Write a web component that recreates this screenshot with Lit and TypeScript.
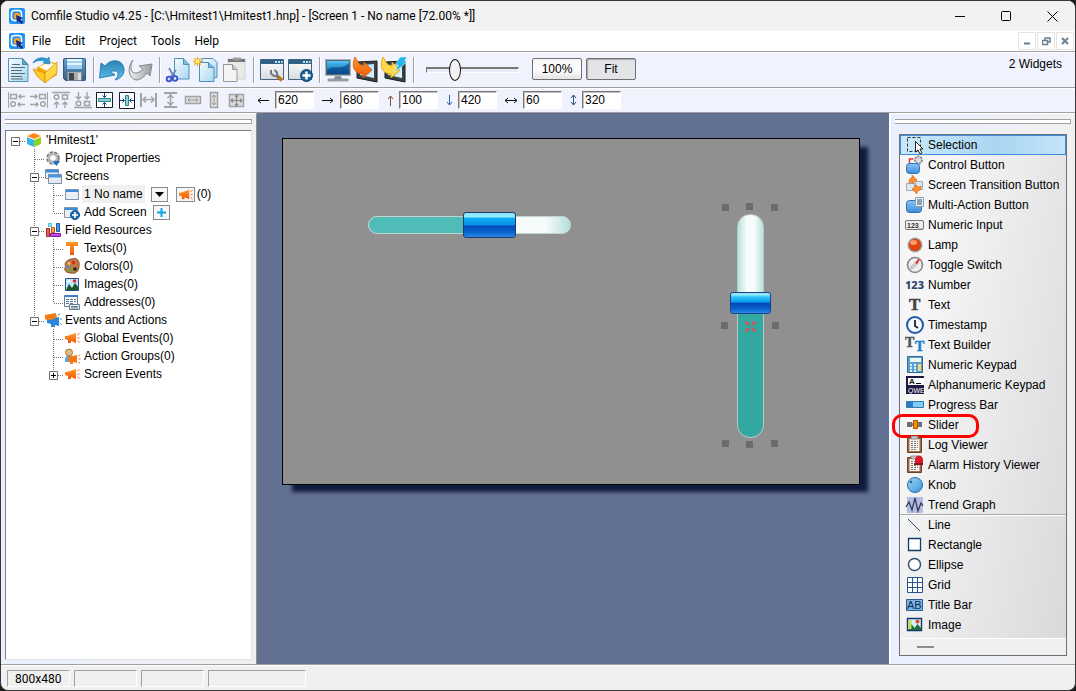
import { LitElement, html, svg, css } from "lit";
import { customElement } from "lit/decorators.js";

/* ---------- Toolbar icons, 28 x 26 ---------- */
const toolIcons: Record<string, unknown> = {
  doc: svg`<path d="M4.500 1.500h14l5.500 6v17h-19.500z" fill="url(#paper)" stroke="#5a93b5"/><path d="M18.500 1.500v6h5.500z" fill="#5ea9d2" stroke="#4b89b0"/><path d="M8 7.500h8M7 10.500h14M7 13.500h11M7 16.500h14M7 19.500h11M7 22h12" stroke="#566a78" stroke-width="1.200"/>`,
  open: svg`<path d="M4 11l13-7 8 3v11l-12 7z" fill="#f5a800"/><path d="M7 10l10-5 7 3-9 6z" fill="#fffdf0"/><path d="M1 12l12 4v10l-8-7z" fill="#ffc928" stroke="#dc8a00" stroke-width=".8"/><path d="M13 16l12-11v11l-12 10z" fill="#ffd84a" stroke="#e09000" stroke-width=".8"/><path d="M1 6c3-6 10-6 14-4l2-2 1 7-7-1 2-2c-4-1-8-1-12 2z" fill="#2b9bd8" stroke="#1479b4" stroke-width=".6"/>`,
  save: svg`<path d="M3.500 2.500q0-1 1-1h20q1 0 1 1v20q0 1-1 1h-19l-2-2z" fill="url(#steel)" stroke="#35597c"/><path d="M7 2h15v10h-15z" fill="#e8f5ff"/><path d="M7 4h15v2h-15zM7 8h15v4h-15z" fill="#9fd0ef"/><path d="M7.500 15h14v8.500h-14z" fill="#a9adb0"/><path d="M9 16h5v7h-5z" fill="#3e464c"/><path d="M18 16h3v7h-3z" fill="#dadddf"/>`,
  undo: svg`<path d="M3 6l4 3c6-8 18-7 19 3 .5 6-4 10-9 11 4-4 4-9 0-9-2 0-3 0-4 1l4 3-15.500 3z" fill="url(#blueArrow)" stroke="#166e9d" stroke-width=".8"/>`,
  redo: svg`<path d="M7 3c-6 7-5 18 3 20 5 0 9-4 11-7l3 3 2-12-13 2 4 3c-4 5-12 6-12-1 0-4 0-5 2-8z" fill="url(#grayArrow)" stroke="#83868a" stroke-width="1"/>`,
  cut: svg`<path d="M10.500 1.500h9l5.500 6v14.500h-14.500z" fill="url(#paper)" stroke="#4d91ba"/><path d="M19.500 1.500v6h5.500" fill="#7dbce0" stroke="#4d91ba"/><path d="M5 11l5 9M12 13l-6 8" stroke="#6a86b8" stroke-width="1.800"/><circle cx="5" cy="22" r="2.300" fill="#d9e0ff" stroke="#3c52c8" stroke-width="1.800"/><circle cx="11" cy="21.500" r="2.300" fill="#d9e0ff" stroke="#3c52c8" stroke-width="1.800"/>`,
  copy: svg`<path d="M10 1.500h11l4 4v15h-15z" fill="url(#paper)" stroke="#4d91ba"/><path d="M7.500 5.500h9l5.500 5v14h-14.500z" fill="url(#paper)" stroke="#4d91ba"/><path d="M16.500 5.500v5h5.500" fill="#7dbce0" stroke="#4d91ba"/><path d="M5.500 0v9M1 4.500h9M2.300 1.300l6.400 6.400M8.700 1.300l-6.400 6.400" stroke="#f0a818" stroke-width="1.300"/><circle cx="5.500" cy="4.500" r="2" fill="#fff07a"/>`,
  paste: svg`<path d="M8 2h17v20h-17z" fill="#e9e9e9" stroke="#d2d2d2"/><path d="M8 2h17v3h-17z" fill="#777"/><path d="M13 .5h8v3h-8z" fill="#9b9b9b"/><path d="M3.500 7.500h9l4.500 5v12h-13.500z" fill="#f4f4f4" stroke="#999"/><path d="M12.500 7.500v5h4.500" fill="#ccc" stroke="#999"/>`,
  winTool: svg`<path d="M2.500 2.500h23v20h-23z" fill="url(#winBody)" stroke="#3e6584"/><path d="M3 3h22v4h-22z" fill="#2f6285"/><path d="M17 4h2v2h-2zM20 4h2v2h-2zM23 4h1.500v2h-1.500z" fill="#bfe0f2"/><path d="M18 18l6 5.500" stroke="#b96f1e" stroke-width="3.500"/><path d="M13 13v3.500l3 2.500h3v-3.500l-2.500-2.500" fill="none" stroke="#6d7b86" stroke-width="2"/>`,
  winAdd: svg`<path d="M2.500 2.500h23v20h-23z" fill="url(#winBody)" stroke="#3e6584"/><path d="M3 3h22v4h-22z" fill="#2f6285"/><path d="M17 4h2v2h-2zM20 4h2v2h-2zM23 4h1.500v2h-1.500z" fill="#bfe0f2"/><circle cx="20.500" cy="18.500" r="6" fill="#1a6196" stroke="#0f4268"/><path d="M20.500 14.500v8M16.500 18.500h8" stroke="#fff" stroke-width="2.400"/>`,
  monitor: svg`<path d="M1.500 2.500h25v16h-25z" fill="#586c78" stroke="#a8b2b8"/><path d="M3 4h22v13h-22z" fill="url(#screenBlue)"/><path d="M3 13c7-6 14 1 22-7v11h-22z" fill="#053d7b" opacity=".6"/><path d="M11 19h6l1 3h-8z" fill="#89949a"/><path d="M4 22h20v2h-20z" fill="#a7b0b5" stroke="#68747b" stroke-width=".6"/>`,
  down: svg`<path d="M5 5l20-1v21l-20-4z" fill="#3a4247" stroke="#171c20"/><path d="M8 8l14-1v14l-14-3z" fill="url(#screenSky)"/><path d="M3 0c3 4 3 8 9 9v-4l8 8-9 8v-4c-9 0-12-8-8-17z" fill="url(#orange)" stroke="#d45a00" stroke-width=".8"/>`,
  run: svg`<path d="M5 5l20-1v21l-20-4z" fill="#3a4247" stroke="#171c20"/><path d="M8 8l14-1v14l-14-3z" fill="url(#screenSky)"/><path d="M3 0c3 4 3 8 9 9v-4l8 8-9 8v-4c-9 0-12-8-8-17z" fill="#ffd84b" stroke="#dda000" stroke-width=".8"/><path d="M20 0h7l-3 5h3l-12 10 3-7h-3z" fill="#20b7ec" stroke="#eefaff" stroke-width=".5"/>`,
};

/* ---------- Alignment icons, 22 x 18 ---------- */
const G = "#a3a3a3";
const alignIcons: Record<string, unknown> = {
  left: svg`<path d="M2.500 1v16" stroke="${G}"/><path d="M4.500 3.500h6v4h-6z" fill="none" stroke="${G}" stroke-width="1.500"/><circle cx="7" cy="13" r="2.300" fill="none" stroke="${G}" stroke-width="1.500"/><path d="M19 5.500h-6m2-2l-2 2 2 2M19 13.500h-7m2-2l-2 2 2 2" fill="none" stroke="${G}" stroke-width="1.400"/>`,
  right: svg`<path d="M19.500 1v16" stroke="${G}"/><path d="M11.500 3.500h6v4h-6z" fill="none" stroke="${G}" stroke-width="1.500"/><circle cx="15" cy="13" r="2.300" fill="none" stroke="${G}" stroke-width="1.500"/><path d="M2 5.500h7m-2-2l2 2-2 2M2 13.500h8m-2-2l2 2-2 2" fill="none" stroke="${G}" stroke-width="1.400"/>`,
  top: svg`<path d="M2 1.500h18" stroke="${G}" stroke-width="1.400"/><circle cx="6.500" cy="6" r="2.300" fill="none" stroke="${G}" stroke-width="1.500"/><path d="M12.500 4h5v4h-5z" fill="none" stroke="${G}" stroke-width="1.500"/><path d="M6.500 17v-6m-2.500 2.500l2.500-2.500 2.500 2.500M15 17v-6m-2.500 2.500l2.500-2.500 2.500 2.500" fill="none" stroke="${G}" stroke-width="1.400"/>`,
  bottom: svg`<path d="M2 16.500h18" stroke="${G}" stroke-width="1.400"/><circle cx="6.500" cy="12.500" r="2.300" fill="none" stroke="${G}" stroke-width="1.500"/><path d="M12.500 10.500h5v4h-5z" fill="none" stroke="${G}" stroke-width="1.500"/><path d="M6.500 1v7m-2.500-2.500l2.500 2.500 2.500-2.500M15 1v7m-2.500-2.500l2.500 2.500 2.500-2.500" fill="none" stroke="${G}" stroke-width="1.400"/>`,
  midV: svg`<path d="M2.500 1.500h16v15h-16z" fill="#fff" stroke="#1c1c1c"/><path d="M4.500 7.500h12v3h-12z" fill="#8fd0d4" stroke="#26848c"/><path d="M10.500 2v4m-2-1.500l2 2 2-2M10.500 16v-4m-2 1.500l2-2 2 2" fill="none" stroke="#123d7c"/>`,
  midH: svg`<path d="M3.500 1.500h15v16h-15z" fill="#fff" stroke="#1c1c1c"/><path d="M9.500 4.500h3v10h-3z" fill="#8fd0d4" stroke="#26848c"/><path d="M4 9.500h4m-1.500-2l2 2-2 2M18 9.500h-4m1.500-2l-2 2 2 2" fill="none" stroke="#123d7c"/>`,
  spaceH: svg`<path d="M3 2v14M18 2v14" stroke="${G}" stroke-width="2"/><path d="M5 8.500h11m-8-3l-3 3 3 3m5-6l3 3-3 3" fill="none" stroke="${G}" stroke-width="1.500"/>`,
  spaceV: svg`<path d="M4 2h13M4 16h13" stroke="${G}" stroke-width="2"/><path d="M10.500 3v12m-3-8l3-3 3 3m-6 4l3 3 3-3" fill="none" stroke="${G}" stroke-width="1.500"/>`,
  sameW: svg`<path d="M3.500 5.500h15v7h-15z" fill="#ddd" stroke="${G}" stroke-width="1.500"/><path d="M6 9h10m-8-2l-2 2 2 2m6-4l2 2-2 2" fill="none" stroke="#999"/>`,
  sameH: svg`<path d="M6.500 1.500h7v15h-7z" fill="#ddd" stroke="${G}" stroke-width="1.500"/><path d="M10 4v10m-2-8l2-2 2 2m-4 6l2 2 2-2" fill="none" stroke="#999"/>`,
  same: svg`<path d="M3.500 3.500h14v12h-14z" fill="#ddd" stroke="${G}" stroke-width="1.500"/><path d="M5 9.500h11m-5.500-5v10M7 7.500l-2 2 2 2m7-4l2 2-2 2M9 6l1.500-2 1.500 2m-3 7l1.500 2 1.500-2" fill="none" stroke="#888" stroke-width="1.200"/>`,
};

/* ---------- Small tree icons, 19 x 18 ---------- */
const horn = (f: string) => svg`<path d="M2 7l2 0 9-3v10l-5-2v2h-3v-3l-3-1z" fill="${f}"/><path d="M14.500 6l2-1.500M14.500 9h2M14.500 12l2 1.500" stroke="#ff5a2c"/>`;
const treeIcons: Record<string, unknown> = {
  cube: svg`<path d="M9 2l7 3-7 3-7-3z" fill="#ff8a17"/><path d="M2 6l7 3v7l-7-3z" fill="#35b5ea"/><path d="M16 6l-7 3v7l7-3z" fill="#8ed321"/>`,
  gear: svg`<circle cx="9" cy="9" r="5" fill="none" stroke="#7c7c7c" stroke-width="3.500" stroke-dasharray="3 1"/><circle cx="9" cy="9" r="4" fill="none" stroke="#b8b8b8" stroke-width="2.500"/><path d="M9 12h7l-3.500 5z" fill="#1673c4"/>`,
  screens: svg`<path d="M1.500 2.500h13v9h-13z" fill="#e9eff5" stroke="#7390ad"/><path d="M2 3h12v2.500h-12z" fill="#3d8bdc"/><path d="M4.500 7.500h13v9h-13z" fill="#e4eaf0" stroke="#7390ad"/><path d="M5 8h12v2.500h-12z" fill="#4a98e4"/>`,
  screen: svg`<path d="M2.500 4.500h13v10h-13z" fill="#e9eef3" stroke="#7c95ae"/><path d="M3 5h12v2h-12z" fill="#3d8bdc"/>`,
  screenAdd: svg`<path d="M1.500 4.500h13v10h-13z" fill="#e9eef3" stroke="#7c95ae"/><path d="M2 5h12v2h-12z" fill="#3d8bdc"/><circle cx="12" cy="12" r="4.500" fill="#1e69ae" stroke="#12528d"/><path d="M12 9v6M9 12h6" stroke="#fff" stroke-width="1.600"/>`,
  blocks: svg`<path d="M4.500 2.500h3v3h-3z" fill="#a8edff" stroke="#3cbde0"/><path d="M2.500 7.500h3v8h-3z" fill="#ee5b60" stroke="#a12828"/><path d="M7.500 6.500h3v5h-3z" fill="#ff9d3b" stroke="#c65a00"/><path d="M12.500 2.500h3v8h-3z" fill="#419bea" stroke="#1a5fa0"/><path d="M6.500 12.500h10v3h-10z" fill="#c14ae5" stroke="#7e1ba0"/>`,
  tee: svg`<path d="M3 3h12v4h-4v9h-4v-9h-4z" fill="url(#orange)"/>`,
  palette: svg`<path d="M9 2c5-2 8 2 7 7 0 6-4 8-8 7-4 0-7-2-6-5 1-2 0-3 0-4 1-3 4-5 7-5z" fill="#bd7a48" stroke="#875028"/><circle cx="10.500" cy="5.500" r="1.800" fill="#e22"/><circle cx="5" cy="10" r="1.500" fill="#2a9cee"/><circle cx="7" cy="13.500" r="1.500" fill="#3cbb36"/><circle cx="12" cy="12" r="1.800" fill="#222"/><circle cx="6" cy="6.500" r="1.300" fill="#ffe14a"/>`,
  image: svg`<path d="M2.500 3.500h13v12h-13z" fill="#bfe6ff" stroke="#23527e"/><path d="M3 15l3-6 3 4 3-5 3 4v3z" fill="#165a2c"/><circle cx="11.500" cy="6" r="1.800" fill="#e22"/><path d="M4 7c0-2 4-2 4 0z" fill="#fff"/>`,
  list: svg`<path d="M1.500 2.500h13v11h-13z" fill="#f4f7fb" stroke="#667d95"/><path d="M2 2h13v2h-13z" fill="#3e7dc8"/><path d="M3 6.500h10M3 8.500h10M3 10.500h7" stroke="#657689" stroke-dasharray="3 1"/><path d="M6.500 11.500h10v5h-10z" fill="#eef3f8" stroke="#667d95"/><path d="M8 13.500h7M8 15h7" stroke="#657689"/>`,
  horns: svg`<path d="M1 4l11-2 1 5-8 3-4-2z" fill="#f47a16"/><path d="M3 9l3 0 9-3v9l-4-1v2h-4v-3l-4-1z" fill="#2a86d8"/><path d="M14 4l2-1M16 8h2M16 12l2 2" stroke="#3a93d8"/>`,
  horn: horn("url(#orange)"),
  action: svg`<path d="M2 12c0-5 9-5 9 0v3h-9z" fill="#5da7e2"/><circle cx="6" cy="5.500" r="3.500" fill="#e7b77d" stroke="#a57842"/><path d="M5 10l9-2v8l-4-1v2h-3v-2l-2-1z" fill="#f47a16"/><path d="M15.500 9l1.500-1M15.500 12h2M15.500 15l1.500 1" stroke="#ff5a2c"/>`,
};

/* ---------- Widget palette icons, 20 x 20 ---------- */
const clip = svg`<path d="M2.500 2.500h14v15h-14z" fill="#a4694b" stroke="#6f3f27"/><path d="M4.500 4h10v12h-10z" fill="#f5f5f2"/><path d="M6 1h7v3h-7z" fill="#c9c9c9" stroke="#666" stroke-width=".7"/><path d="M6 6.500h7M6 8.500h7M6 10.500h7M6 12.500h7M6 14.500h5" stroke="#777" stroke-dasharray="2 1"/>`;
const widgetIcons: Record<string, unknown> = {
  selection: svg`<path d="M2.500 2.500h13v14h-13z" fill="none" stroke="#333" stroke-dasharray="3 2"/><path d="M10.500 6.500v10.500l2.500-2 2 4 2-1-2-4h3z" fill="#fff" stroke="#222"/>`,
  control: svg`<circle cx="13.500" cy="5" r="3.500" fill="#ddd" stroke="#888" stroke-width="2" stroke-dasharray="2 1"/><path d="M4.500 9v-5h4" fill="none" stroke="#e33" stroke-width="1.500"/><rect x="1.500" y="8.500" width="13" height="10" rx="3" fill="url(#btnBlue)" stroke="#2c73b8"/>`,
  transition: svg`<path d="M1.500 8.500h8v7h-8zM10.500 6.500h7v8h-7z" fill="#dfe8f1" stroke="#9aacbd"/><path d="M4 8c0-4 1-5 3-5v-3l5 5-5 4v-2c-1 0-1 0-3 1z" fill="#ff8e2c" stroke="#dd6200" stroke-width=".6"/><path d="M16 11c0 4-1 5-4 5v3l-5-5 5-4v2c1 0 2 0 4-1z" fill="#ff8e2c" stroke="#dd6200" stroke-width=".6"/>`,
  multi: svg`<rect x="1.500" y="5.500" width="15" height="12" rx="3" fill="url(#btnBlue)" stroke="#2c73b8"/><path d="M10.500 2.500h8v9h-8z" fill="#eaf2f9" stroke="#8aa1b6"/><path d="M12 5h5M12 7h5M12 9h5" stroke="#34536f"/>`,
  numInput: svg`<rect x=".5" y="5.500" width="18" height="9" rx="1.500" fill="#eee" stroke="#777"/><text x="2" y="13" font-family="Liberation Sans" font-size="7" font-weight="700" fill="#333">123_</text>`,
  lamp: svg`<circle cx="10" cy="10" r="7.500" fill="#8c8c8c" stroke="#ddd"/><circle cx="10" cy="10" r="6" fill="#e2420c"/><ellipse cx="8.500" cy="7.500" rx="3.500" ry="2.500" fill="#ff9a68"/>`,
  toggle: svg`<circle cx="10" cy="10" r="7.500" fill="#eee" stroke="#888" stroke-width="1.600"/><path d="M5 14l8-7" stroke="#ccc" stroke-width="4"/><path d="M11 8.500l3-4" stroke="#e22" stroke-width="2"/>`,
  number: svg`<text x="0" y="14" font-family="Noto Sans" font-size="11" font-weight="800" fill="#2f466e">123</text>`,
  text: svg`<text x="4" y="15" font-family="Liberation Serif" font-size="17" font-weight="700" fill="#444" stroke="#444" stroke-width=".5">T</text>`,
  time: svg`<circle cx="10" cy="10" r="8" fill="#f8fbff" stroke="#1d5aa8" stroke-width="2"/><path d="M10 5v6l3 2" fill="none" stroke="#222" stroke-width="1.800"/>`,
  builder: svg`<text x="0" y="12" font-family="Liberation Serif" font-size="14" font-weight="700" fill="#555" stroke="#555" stroke-width=".5">T</text><text x="10" y="16" font-family="Liberation Serif" font-size="14" font-weight="700" fill="#1b7fd2" stroke="#1b7fd2" stroke-width=".5">T</text>`,
  keypad: svg`<path d="M2.500 1.500h15v16h-15z" fill="#5a9fcd" stroke="#2e6c99"/><path d="M5 3h11v4h-11z" fill="#eef7e8"/><path d="M5 10h2M9 10h2M5 13h2M9 13h2M5 16h2M9 16h2" stroke="#e7f2fa" stroke-width="2"/><path d="M13 9h3v7h-3z" fill="#ffd36b"/>`,
  alpha: svg`<path d="M1 1h18v18h-18z" fill="#1e1b42"/><path d="M3 3h16v7h-16z" fill="#fff"/><text x="4" y="9" font-family="Liberation Sans" font-size="8" font-weight="700" fill="#111">A</text><path d="M11 8.500h5" stroke="#111"/><text x="3" y="18" font-family="Liberation Sans" font-size="7" fill="#fff">QWE</text>`,
  progress: svg`<path d="M1.500 6.500h17v6h-17z" fill="#7ccdf7" stroke="#3a7aa6"/><path d="M2 7h6v5h-6z" fill="#2b7cc9"/>`,
  slider: svg`<path d="M2 7h5v5h-5zM13 7h4v5h-4z" fill="#6f6f6f"/><path d="M7 8h7v3h-7z" fill="#888"/><path d="M8.500 5.500h4v8h-4z" fill="#ff8a00" stroke="#a65300"/>`,
  log: clip,
  alarm: svg`${clip}<path d="M10 8v-3c0-6 8-6 8 0v3z" fill="#dc1826"/><path d="M9 8h9v2h-9z" fill="#8f0f18"/>`,
  knob: svg`<circle cx="10" cy="10" r="7.500" fill="url(#knob)" stroke="#2a6ea2"/><circle cx="6" cy="7" r="1.300" fill="#1e6098"/>`,
  trend: svg`<path d="M2 2h16v16h-16z" fill="#b4bde6"/><path d="M1 12l3-5 3 8 3-12 3 13 3-8 2 3" fill="none" stroke="#333c55" stroke-width="1.300"/>`,
  line: svg`<path d="M3 4l12 12" stroke="#24446e"/>`,
  rect: svg`<path d="M3.500 3.500h12v12h-12z" fill="#fff" stroke="#123a6b" stroke-width="1.300"/>`,
  ellipse: svg`<circle cx="9.500" cy="9.500" r="6" fill="#fff" stroke="#36506e" stroke-width="1.500"/>`,
  grid: svg`<path d="M2.500 2.500h15v15h-15zM7.500 3v14M12.500 3v14M3 7.500h14M3 12.500h14" fill="#fff" stroke="#27568f"/>`,
  title: svg`<path d="M1.500 4.500h16v11h-16z" fill="#7db6e6" stroke="#2a5f93"/><text x="2" y="14" font-family="Liberation Sans" font-size="11" fill="#0b2b52">AB</text>`,
  image: svg`<path d="M2.500 3.500h14v12h-14z" fill="#d5f0ff" stroke="#123a6b" stroke-width="1.400"/><path d="M3.500 15l3-6 3 4 3-4 3.500 4v2z" fill="#1f7034"/><path d="M3.500 5h3v9h-3z" fill="#c7dd55"/><circle cx="12.500" cy="6.500" r="2" fill="#f0431e"/>`,
};

type Guide = "none" | "line" | "tee" | "end" | "minus" | "plus";
interface TreeRow {
  guides: Guide[];
  icon: string;
  label: string;
  extra?: "screen" | "add";
  last?: boolean;
  root?: boolean;
}

const tree: TreeRow[] = [
  { guides: ["minus"], icon: "cube", label: "'Hmitest1'", root: true },
  { guides: ["none", "tee"], icon: "gear", label: "Project Properties" },
  { guides: ["none", "minus"], icon: "screens", label: "Screens" },
  { guides: ["none", "line", "tee"], icon: "screen", label: "1 No name", extra: "screen" },
  { guides: ["none", "line", "end"], icon: "screenAdd", label: "Add Screen", extra: "add" },
  { guides: ["none", "minus"], icon: "blocks", label: "Field Resources" },
  { guides: ["none", "line", "tee"], icon: "tee", label: "Texts(0)" },
  { guides: ["none", "line", "tee"], icon: "palette", label: "Colors(0)" },
  { guides: ["none", "line", "tee"], icon: "image", label: "Images(0)" },
  { guides: ["none", "line", "end"], icon: "list", label: "Addresses(0)" },
  { guides: ["none", "minus"], icon: "horns", label: "Events and Actions", last: true },
  { guides: ["none", "none", "tee"], icon: "horn", label: "Global Events(0)" },
  { guides: ["none", "none", "tee"], icon: "action", label: "Action Groups(0)" },
  { guides: ["none", "none", "plus"], icon: "horn", label: "Screen Events", last: true },
];

const widgets: [string, string][] = [
  ["selection", "Selection"], ["control", "Control Button"], ["transition", "Screen Transition Button"],
  ["multi", "Multi-Action Button"], ["numInput", "Numeric Input"], ["lamp", "Lamp"], ["toggle", "Toggle Switch"],
  ["number", "Number"], ["text", "Text"], ["time", "Timestamp"], ["builder", "Text Builder"],
  ["keypad", "Numeric Keypad"], ["alpha", "Alphanumeric Keypad"], ["progress", "Progress Bar"],
  ["slider", "Slider"], ["log", "Log Viewer"], ["alarm", "Alarm History Viewer"], ["knob", "Knob"], ["trend", "Trend Graph"],
];
const shapes: [string, string][] = [
  ["line", "Line"], ["rect", "Rectangle"], ["ellipse", "Ellipse"], ["grid", "Grid"], ["title", "Title Bar"], ["image", "Image"],
];

const toolGroups: [string, string][][] = [
  [["doc", "New"], ["open", "Open"], ["save", "Save"]],
  [["undo", "Undo"], ["redo", "Redo"]],
  [["cut", "Cut"], ["copy", "Copy"], ["paste", "Paste"]],
  [["winTool", "Screen properties"], ["winAdd", "Add screen"]],
  [["monitor", "Simulate"], ["down", "Download"], ["run", "Build and download"]],
];

const fields: [string, string, string, boolean][] = [
  ["x1", "M12 5.500H1M4 3l-3 2.500 3 2.500", "620", true],
  ["x2", "M0 5.500h11M8 3l3 2.500-3 2.500", "680", true],
  ["y1", "M6.500 11V1M4 4l2.500-3 2.500 3", "100", false],
  ["y2", "M6.500 0v10M4 7l2.500 3 2.500-3", "420", false],
  ["width", "M0 5.500h12M3 3L0 5.500l3 2.500M9 3l3 2.500L9 8", "60", true],
  ["height", "M6.500 0v10M4 3l2.500-3 2.500 3M4 7l2.500 3 2.500-3", "320", false],
];
const fieldColors = ["#111", "#111", "#8a4a2c", "#2c62a8", "#111", "#24527c"];

const handles: [number, number][] = [
  [725, 207], [749, 206], [774, 207], [724, 325], [775, 325], [725, 443], [749, 444], [774, 443],
];

@customElement("app-root")
export class AppRoot extends LitElement {
  static styles = css`
    :host { display: block; height: 100vh; background: #1b1a1c; color: #000; font: 12px/18px "Liberation Sans", Arial, sans-serif; }
    * { box-sizing: border-box; }
    button, input { font: inherit; color: inherit; margin: 0; padding: 0; border: 0; background: none; }
    svg { display: block; flex: none; }
    .defs { position: absolute; }
    .window { height: 100%; display: flex; flex-direction: column; border: 1px solid #39363a; border-radius: 8px; overflow: hidden; background: #f0f0f0; }
    .ui { font-family: Roboto, "Open Sans", sans-serif; }

    .title { flex: none; height: 30px; display: flex; align-items: center; gap: 6px; padding-left: 8px; background: #f2f2f2; }
    .title h1 { flex: 1; margin: 0; font: inherit; white-space: nowrap; }
    .caption { width: 46px; height: 30px; display: grid; place-items: center; }
    .menu { flex: none; height: 20px; display: flex; align-items: center; padding-left: 8px; background: #fff; }
    .menu nav { flex: 1; display: flex; }
    .menu nav button { padding: 0 7px; }
    .mdi { width: 18px; height: 18px; margin-right: 1px; display: grid; place-items: center; border: 1px solid #e4e4e4; }

    .bar { flex: none; display: flex; align-items: center; background: #f0f3fe; border-top: 1px solid #a0a0a0; box-shadow: inset 0 1px #fff; }
    .bar.main { height: 36px; padding-left: 3px; }
    .bar.align { height: 25px; padding-left: 5px; }
    .group { display: flex; align-items: center; }
    .fields { display: flex; margin-left: 1px; }
    .sep { width: 10px; height: 26px; display: flex; justify-content: center; }
    .sep::before { content: ""; width: 1px; background: #a0a0a0; box-shadow: 1px 0 #fff; }
    .zoom { appearance: none; width: 93px; height: 22px; margin: 0 13px 0 8px; }
    .zoom::-webkit-slider-runnable-track { height: 6px; border: 1px solid; border-color: #777 #fff #fff #777; border-top-width: 2px; background: #e9ebf4; }
    .zoom::-webkit-slider-thumb { appearance: none; width: 12px; height: 22px; margin-top: -10px; border: 1px solid #111; border-radius: 50%; background: #f2f2f2; }
    .push { width: 50px; height: 22px; margin: 0 4px 2px 0; border: 1px solid #707070; border-radius: 2px; background: linear-gradient(#f6f6f6, #fff 50%, #e4e4e4); line-height: 20px; }
    .push.down { background: #e3e4e8; box-shadow: inset 1px 1px 1px #aaa; }
    .count { margin: 0 13px 12px auto; }
    .field { display: flex; align-items: center; }
    .field label { width: 20px; display: grid; place-items: center; padding-left: 2px; }
    .field.wide label { width: 26px; }
    .field input { width: 39px; height: 18px; padding-left: 2px; background: #fff; border: 1px solid; border-color: #777 #fff #fff #777; box-shadow: inset 1px 1px #c0c0c0; }

    .body { flex: 1; min-height: 0; display: flex; border-top: 1px solid #a0a0a0; }
    .side { flex: none; display: flex; flex-direction: column; background: linear-gradient(90deg, #eaefff, #f0f0f0); border-top: 1px solid #fff; }
    .side.left { width: 256px; padding: 5px 4px 4px; border-right: 1px solid #909090; }
    .side.right { width: 186px; padding: 5px 4px 8px; border-left: 2px solid #fff; }
    .grip { height: 5px; border: 1px solid #a0a0a0; border-left: 0; background: #fff; }
    .tree { flex: 1; min-height: 0; margin: 6px 0 0; list-style: none; padding: 0; background: #fff; border: 1px solid; border-color: #808080 #e3e3e3 #e3e3e3 #808080; overflow: hidden; }
    .tree li { display: flex; align-items: center; height: 18px; white-space: nowrap; }
    .tree .label { margin-left: 2px; }
    .tree .label.picked { background: #f0f0f0; padding: 0 2px; margin-left: 0; }
    .guide { flex: none; width: 19px; height: 18px; }
    .mini { height: 15px; margin-left: 6px; display: grid; place-items: center; border: 1px solid #8a8a8a; background: #f6f6f6; width: 17px; }
    .mini.event { width: 19px; margin: 0 2px 0 8px; }

    .stage { flex: 1; min-width: 0; position: relative; overflow: hidden; background: #637192; }
    .screen { position: absolute; left: 25px; top: 25px; width: 578px; height: 347px; background: #909090; border: 1px solid #000; box-shadow: 9px 8px 4px -1px #101c3e; }
    .hslider, .vslider { position: absolute; appearance: none; }
    .hslider { left: 85px; top: 73px; width: 203px; height: 26px; }
    .hslider::-webkit-slider-runnable-track { height: 18px; border: 1px solid #c3d3d0; border-radius: 9px; background: linear-gradient(90deg, #50bcb8 60%, transparent 60%), linear-gradient(90deg, #f6fcf9 88%, #b5dedb), #f6fcf9; }
    .hslider::-webkit-slider-thumb { appearance: none; width: 53px; height: 26px; margin-top: -5px; border: 1px solid #27366e; border-radius: 3px; background: linear-gradient(#8ee8fb 0 8%, #9beafb 16%, #0ab0f5 22%, #0a8ee8 50%, #0647b8 54%, #0a63cf 80%, #2a8ae6); }
    .vslider { left: 447px; top: 75px; width: 41px; height: 224px; writing-mode: vertical-lr; direction: rtl; }
    .vslider::-webkit-slider-runnable-track { width: 27px; border: 1px solid #b7c6c3; border-radius: 13px; background: linear-gradient(transparent 40%, #33a8a0 40%), linear-gradient(90deg, #b9e2dd, #f6fcf9 35% 65%, #b9e2dd); }
    .vslider::-webkit-slider-thumb { appearance: none; width: 41px; height: 22px; margin: 0 -8px; border: 1px solid #1d3f8e; border-radius: 3px; background: linear-gradient(#8ee8fb 0 10%, #2cc6f7 20%, #0a9aee 45%, #0647b8 52%, #0a63cf 80%, #2a8ae6); }
    .handle { position: absolute; width: 7px; height: 7px; background: #6c6c6c; }
    .cross { position: absolute; left: 462px; top: 182px; }

    .palette { flex: 1; display: flex; flex-direction: column; margin: 10px 4px 0 4px; border: 1px solid #707070; background: linear-gradient(100deg, #f6f6f6 20%, #d9d9dc 100%); }
    .palette button { display: flex; align-items: center; gap: 3px; width: 100%; height: 20px; padding-left: 5px; white-space: nowrap; text-align: left; }
    .palette button.on { padding-left: 4px; border: 1px solid #3c8fe0; background: linear-gradient(90deg, #c9e9fa, #a9d6f2 60%, #c4e4f7); }
    .items { margin: 0; padding: 0; list-style: none; }
    .items li { position: relative; }
    .items + .items { box-shadow: inset 0 1px #fff, 0 -1px #aaa; }
    .mark { position: absolute; left: -8px; top: -1px; width: 87px; height: 24px; border: 3px solid #f00; border-radius: 10px; }
    .more { flex: 1; margin-top: 3px; background: #f0f0f0; border-top: 1px solid #fff; padding: 7px 0 0 17px; }
    .more::before { content: ""; display: block; width: 17px; height: 2px; background: #8c8c8c; }

    .status { flex: none; height: 26px; display: flex; gap: 4px; padding: 5px 5px 2px 6px; border-top: 1px solid #a0a0a0; box-shadow: inset 0 1px #fff; }
    .status span { width: 63px; height: 17px; padding-left: 7px; line-height: 17px; border: 1px solid; border-color: #a0a0a0 #fff #fff #a0a0a0; }
    .status span.long { width: 98px; }
  `;

  private logo() {
    return html`<svg width="16" height="16" viewBox="0 0 16 16"><rect width="16" height="16" rx="2" fill="#2394f2"/><rect x="2.500" y="2.500" width="10" height="10" rx="3" fill="none" stroke="#fff" stroke-width="1.500"/><rect x="5" y="5" width="6" height="6" rx="2" fill="#ffa01c"/><path d="M7 7l7 3-2.500 1.500 2.500 3-1.500 1.500-3-3-1.500 2z" fill="#16267c"/></svg>`;
  }

  private guide(kind: Guide, row: TreeRow) {
    const dots = (d: string) => svg`<path d="${d}" stroke="#777" stroke-dasharray="1 1" fill="none"/>`;
    const box = kind === "minus" || kind === "plus";
    return html`<svg class="guide" viewBox="0 0 19 18">
      ${kind === "line" || kind === "tee" ? dots("M9.500 0v18") : null}
      ${kind === "end" ? dots("M9.500 0v10") : null}
      ${kind === "tee" || kind === "end" || box ? dots("M10 10.500h9") : null}
      ${box && !row.root ? dots("M9.500 0v6") : null}
      ${box && !row.root && !row.last ? dots("M9.500 14v4") : null}
      ${box ? svg`<path d="M5.500 6.500h8v8h-8z" fill="#fff" stroke="#6e6e6e"/><path d="${kind === "plus" ? "M7 10.500h5M9.500 8v5" : "M7 10.500h5"}" stroke="#000"/>` : null}
    </svg>`;
  }

  private treeRow(row: TreeRow) {
    return html`<li>
      ${row.guides.map((g) => this.guide(g, row))}
      <svg width="19" height="18" viewBox="0 0 19 18">${treeIcons[row.icon]}</svg>
      <span class="label ${row.extra === "screen" ? "picked" : ""}">${row.label}</span>
      ${row.extra === "screen" ? html`
        <button class="mini" aria-label="Screen menu"><svg width="9" height="5" viewBox="0 0 9 5"><path d="M0 0h9l-4.500 5z" fill="#000"/></svg></button>
        <button class="mini event" aria-label="Screen events"><svg width="17" height="13" viewBox="0 2 18 14">${treeIcons.horn}</svg></button><span>(0)</span>` : null}
      ${row.extra === "add" ? html`<button class="mini" aria-label="Add screen"><svg width="9" height="9" viewBox="0 0 9 9"><path d="M4.500 0v9M0 4.500h9" stroke="#17a0e0" stroke-width="2"/></svg></button>` : null}
    </li>`;
  }

  private widget([icon, label]: [string, string]) {
    return html`<li><button class=${icon === "selection" ? "on" : ""}><svg width="20" height="20" viewBox="0 0 20 20">${widgetIcons[icon]}</svg>${label}</button>${icon === "slider" ? html`<span class="mark"></span>` : null}</li>`;
  }

  render() {
    return html`
      <svg class="defs" width="0" height="0" aria-hidden="true"><defs>
        <linearGradient id="paper" x2="1" y2="1"><stop stop-color="#f4fbff"/><stop offset="1" stop-color="#a9d7ef"/></linearGradient>
        <linearGradient id="steel" x2="0" y2="1"><stop stop-color="#5d9fd4"/><stop offset="1" stop-color="#3f5f7c"/></linearGradient>
        <linearGradient id="blueArrow" x2="0" y2="1"><stop stop-color="#2a84b4"/><stop offset="1" stop-color="#5bbdec"/></linearGradient>
        <linearGradient id="grayArrow" x2="1" y2="0"><stop stop-color="#eee"/><stop offset="1" stop-color="#9a9da0"/></linearGradient>
        <linearGradient id="winBody" x2="0" y2="1"><stop stop-color="#fff"/><stop offset="1" stop-color="#d7dade"/></linearGradient>
        <linearGradient id="screenBlue" x2="0" y2="1"><stop stop-color="#4ec5f6"/><stop offset="1" stop-color="#0b58a8"/></linearGradient>
        <linearGradient id="screenSky" x2="1" y2="1"><stop stop-color="#8ccdf0"/><stop offset="1" stop-color="#eaf7ff"/></linearGradient>
        <linearGradient id="orange" x2="0" y2="1"><stop stop-color="#ff9a20"/><stop offset="1" stop-color="#f0580c"/></linearGradient>
        <linearGradient id="btnBlue" x2="0" y2="1"><stop stop-color="#8cc6f7"/><stop offset="1" stop-color="#3d8bd9"/></linearGradient>
        <linearGradient id="knob" x2="1" y2="1"><stop stop-color="#9bd6f8"/><stop offset="1" stop-color="#3c97d6"/></linearGradient>
      </defs></svg>
      <div class="window">
        <header class="title ui">
          ${this.logo()}
          <h1>Comfile Studio v4.25 - [C:\\Hmitest1\\Hmitest1.hnp] - [Screen 1 - No name [72.00% *]]</h1>
          <div class="group">
            <button class="caption" aria-label="Minimize"><svg width="11" height="11"><path d="M0 5.500h10" stroke="#000"/></svg></button>
            <button class="caption" aria-label="Maximize"><svg width="11" height="11"><rect x=".5" y=".5" width="9" height="9" rx="1" fill="none" stroke="#000"/></svg></button>
            <button class="caption" aria-label="Close"><svg width="11" height="11"><path d="M.5 .5l10 10M10.500 .5l-10 10" stroke="#000"/></svg></button>
          </div>
        </header>
        <div class="menu ui">
          ${this.logo()}
          <nav>${["File", "Edit", "Project", "Tools", "Help"].map((m) => html`<button>${m}</button>`)}</nav>
          <button class="mdi" aria-label="Minimize screen"><svg width="8" height="8"><path d="M1 6.500h6" stroke="#6b7f90" stroke-width="2"/></svg></button>
          <button class="mdi" aria-label="Restore screen"><svg width="9" height="9"><path d="M.5 3.500h5v4h-5zM3 3v-2h5v4h-2" fill="none" stroke="#6b7f90" stroke-width="1.500"/></svg></button>
          <button class="mdi" aria-label="Close screen"><svg width="8" height="8"><path d="M1 1l6 6M7 1l-6 6" stroke="#6b7f90" stroke-width="2"/></svg></button>
        </div>

        <div class="bar main">
          ${toolGroups.map((g) => html`<div class="group">
            ${g.map(([i, t]) => html`<button aria-label=${t}><svg width="28" height="26" viewBox="0 0 28 26">${toolIcons[i]}</svg></button>`)}
            <span class="sep"></span></div>`)}
          <input class="zoom" type="range" min="0" max="100" value="28" aria-label="Zoom" />
          <button class="push">100%</button><button class="push down">Fit</button>
          <span class="count">2 Widgets</span>
        </div>

        <div class="bar align">
          ${Object.keys(alignIcons).map((k) => html`<button aria-label=${k}><svg width="22" height="18" viewBox="0 0 22 18">${alignIcons[k]}</svg></button>`)}
          <div class="fields">${fields.map(([id, d, v, wide], i) => html`<div class="field ${wide ? "wide" : ""}">
            <label for=${id} aria-label=${id}><svg width="13" height="11" viewBox="0 0 13 11"><path d="${d}" fill="none" stroke="${fieldColors[i]}"/></svg></label>
            <input id=${id} .value=${v} /></div>`)}</div>
        </div>

        <div class="body">
          <aside class="side left">
            <div class="grip"></div>
            <ul class="tree">${tree.map((r) => this.treeRow(r))}</ul>
          </aside>
          <main class="stage">
            <div class="screen">
              <input class="hslider" type="range" min="0" max="1000" value="633" aria-label="Horizontal slider" />
              <input class="vslider" type="range" min="0" max="1000" value="613" aria-label="Vertical slider" />
              ${handles.map(([x, y]) => html`<span class="handle" style="left:${x - 286}px;top:${y - 142}px"></span>`)}
              <svg class="cross" width="11" height="11"><path d="M0 0l4 4M11 0l-4 4M0 11l4-4M11 11l-4-4" stroke="#e8484e" stroke-width="2"/></svg>
            </div>
          </main>
          <aside class="side right">
            <div class="grip"></div>
            <div class="palette">
              <ul class="items">${widgets.map((w) => this.widget(w))}</ul>
              <ul class="items">${shapes.map((w) => this.widget(w))}</ul>
              <div class="more"></div>
            </div>
          </aside>
        </div>

        <footer class="status ui"><span>800x480</span><span></span><span></span><span class="long"></span></footer>
      </div>
    `;
  }
}
